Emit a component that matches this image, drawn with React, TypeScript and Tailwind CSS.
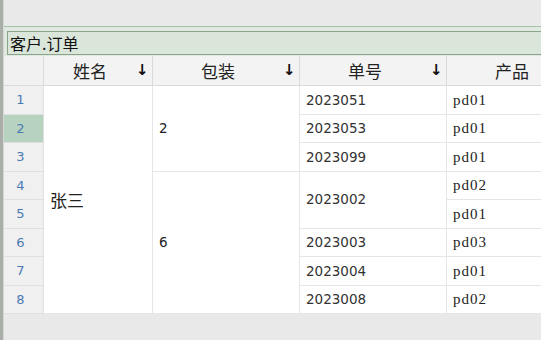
import React from 'react';

const cjk = "font-['Noto_Sans_CJK_SC',sans-serif]";
const num = "font-['DejaVu_Sans',sans-serif]";
const serif = "font-['Liberation_Serif','Noto_Sans_CJK_SC',serif]";

const headers = ['姓名', '包装', '单号', '产品'];

const orders: { row: number; no?: string; noSpan?: number; product: string }[] = [
  { row: 1, no: '2023051', product: 'pd01' },
  { row: 2, no: '2023053', product: 'pd01' },
  { row: 3, no: '2023099', product: 'pd01' },
  { row: 4, no: '2023002', noSpan: 2, product: 'pd02' },
  { row: 5, product: 'pd01' },
  { row: 6, no: '2023003', product: 'pd03' },
  { row: 7, no: '2023004', product: 'pd01' },
  { row: 8, no: '2023008', product: 'pd02' },
];

const rowStart = [
  'row-start-2',
  'row-start-3',
  'row-start-4',
  'row-start-5',
  'row-start-6',
  'row-start-7',
  'row-start-8',
  'row-start-9',
];

const cell = 'bg-white border-r border-b border-[#e6e6e6] flex items-center pl-[6px] text-[#222]';

export default function App() {
  return (
    <div className="w-[541px] h-[340px] overflow-hidden flex bg-[#e9e9e9]">
      {/* left frame edge */}
      <div className="w-[4px] h-full bg-[#a9aea9] border-r border-[#d4d8d4] shrink-0" />
      <div className="flex-1 flex flex-col min-w-0">
        <div className="h-[26px] shrink-0" />

        {/* table caption bar */}
        <div className="h-[30px] shrink-0 border-t border-[#a9c0a9] bg-[#dfe9df] pt-[4px] pl-[3px]">
          <div
            className={`h-[24px] border-l border-t border-b border-[#8aa38a] bg-[#dbe6db] pl-[2px] flex items-center text-[16px] leading-none text-[#111] ${cjk}`}>
            客户.订单
          </div>
        </div>

        {/* grid */}
        <div className="grid grid-cols-[40px_109px_147px_147px_147px] grid-rows-[30px_repeat(8,28.5px)] shrink-0">
          <div className="bg-[#f1f1f1] border-r border-b border-[#dadada]" />
          {headers.map((h) => (
            <div
              key={h}
              className="bg-[#f3f3f3] border-r border-b border-[#dadada] flex items-center pr-[5px]">
              <span className={`flex-1 text-center text-[17px] text-[#222] ${cjk}`}>{h}</span>
              <span className={`w-[11px] text-[15px] font-bold text-[#111] ${num}`}>↓</span>
            </div>
          ))}

          {orders.map((o, i) => (
            <div
              key={'n' + o.row}
              className={`col-start-1 ${rowStart[i]} border-r border-b border-[#e0e0e0] flex items-center justify-center pr-[6px] text-[13px] text-[#4a7ab4] ${num} ${
                o.row === 2 ? 'bg-[#b8d2c0]' : 'bg-[#f0f0f0]'
              }`}>
              {o.row}
            </div>
          ))}

          <div className={`col-start-2 row-start-2 row-span-8 ${cell} text-[17px] ${cjk}`}>张三</div>
          <div className={`col-start-3 row-start-2 row-span-3 ${cell} text-[13.5px] ${num}`}>2</div>
          <div className={`col-start-3 row-start-5 row-span-5 ${cell} text-[13.5px] ${num}`}>6</div>

          {orders.map((o, i) =>
            o.no ? (
              <div
                key={'o' + o.row}
                className={`col-start-4 ${rowStart[i]} ${o.noSpan === 2 ? 'row-span-2' : ''} ${cell} text-[13.5px] text-[#333] ${num}`}>
                {o.no}
              </div>
            ) : null
          )}

          {orders.map((o, i) => (
            <div
              key={'p' + o.row}
              className={`col-start-5 ${rowStart[i]} ${cell} text-[15px] tracking-[1px] ${serif}`}>
              {o.product}
            </div>
          ))}
        </div>

        <div className="flex-1" />
      </div>
    </div>
  );
}
